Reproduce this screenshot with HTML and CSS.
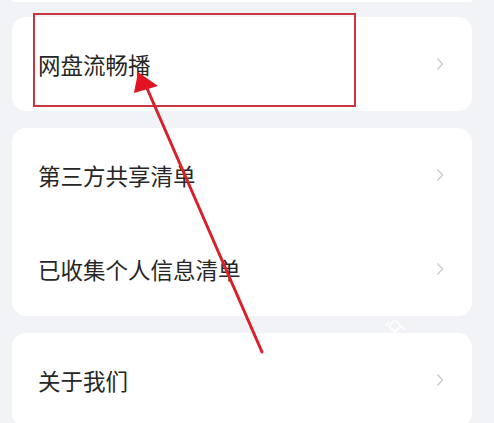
FILE: index.html
```html
<!DOCTYPE html>
<html lang="zh-CN">
<head>
    <meta charset="UTF-8">
    <meta name="viewport" content="width=device-width, initial-scale=1.0">
    <title>设置</title>
    <link rel="stylesheet" href="styles.css">
</head>
<body>
    <div class="page">
        <div class="card card-stub"></div>

        <div class="card">
            <div class="row">
                <span class="label">网盘流畅播</span>
                <svg class="chevron" viewBox="0 0 8 14" width="8" height="14"><path d="M1.5 1.5 L6.5 7 L1.5 12.5"/></svg>
            </div>
        </div>

        <div class="card">
            <div class="row">
                <span class="label">第三方共享清单</span>
                <svg class="chevron" viewBox="0 0 8 14" width="8" height="14"><path d="M1.5 1.5 L6.5 7 L1.5 12.5"/></svg>
            </div>
            <div class="row">
                <span class="label">已收集个人信息清单</span>
                <svg class="chevron" viewBox="0 0 8 14" width="8" height="14"><path d="M1.5 1.5 L6.5 7 L1.5 12.5"/></svg>
            </div>
        </div>

        <div class="card">
            <div class="row">
                <span class="label">关于我们</span>
                <svg class="chevron" viewBox="0 0 8 14" width="8" height="14"><path d="M1.5 1.5 L6.5 7 L1.5 12.5"/></svg>
            </div>
        </div>

        <!-- annotation overlay -->
        <div class="highlight"></div>
        <svg class="arrow" viewBox="0 0 494 423" width="494" height="423">
            <line x1="262" y1="352" x2="146" y2="86" />
            <polygon points="138,72 134,93 158,86" />
        </svg>
        <svg class="watermark" viewBox="0 0 24 18" width="24" height="18">
            <path d="M6 9 L12 3 L18 9 L12 15 Z M2 9 L6 5 M18 9 L22 13" />
        </svg>
    </div>
</body>
</html>
```

FILE: styles.css
```css
html, body {
    margin: 0;
    padding: 0;
}
body {
    background: #f2f3f7;
    font-family: "Noto Sans CJK SC", "Noto Sans", sans-serif;
    color: #262626;
    overflow: hidden;
}
.page {
    position: relative;
    width: 494px;
    height: 423px;
    padding-left: 12px;
    box-sizing: border-box;
}
.card {
    width: 460px;
    background: #ffffff;
    border-radius: 14px;
    margin-bottom: 17px;
}
.card-stub {
    height: 2px;
    border-radius: 0 0 14px 14px;
    margin-bottom: 15px;
}
.row {
    height: 94px;
    display: flex;
    align-items: center;
    justify-content: space-between;
    padding: 0 28px 0 26px;
}
.label {
    font-size: 22.5px;
    line-height: 1;
}
.chevron {
    fill: none;
    stroke: #cbcbcf;
    stroke-width: 1.4;
}
.highlight {
    position: absolute;
    left: 33px;
    top: 13px;
    width: 319px;
    height: 90px;
    border: 2px solid #c9363f;
}
.arrow {
    position: absolute;
    left: 0;
    top: 0;
}
.arrow line {
    stroke: #d8202a;
    stroke-width: 3;
    stroke-linecap: round;
}
.arrow polygon {
    fill: #e0131f;
}
.watermark {
    position: absolute;
    left: 383px;
    top: 317px;
    fill: none;
    stroke: #ffffff;
    stroke-width: 2;
    opacity: 0.8;
}
```
